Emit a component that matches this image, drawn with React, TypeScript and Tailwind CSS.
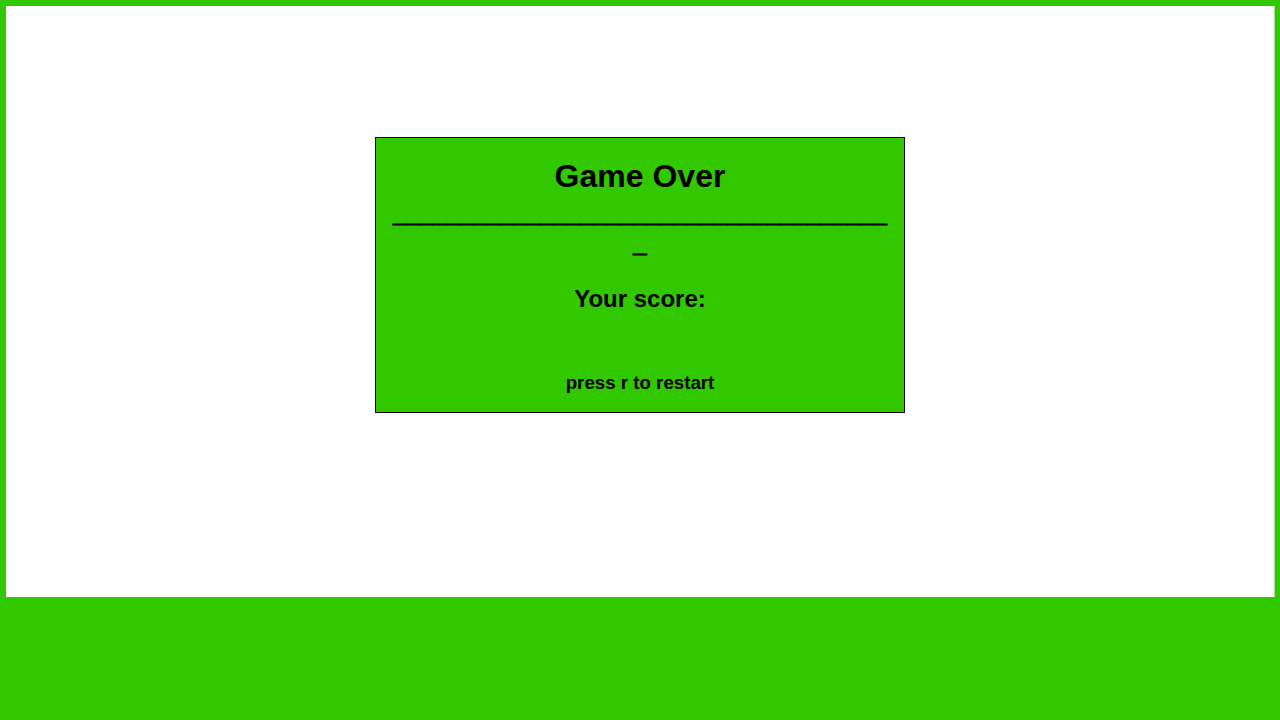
import React from "react";

export default function App() {
  const underscores = "_".repeat(38);
  return (
    <div
      className="h-[720px] w-[1280px] bg-[#32c800] pt-[6px] pl-[6px] pr-[5px]"
      style={{ fontFamily: '"Liberation Sans", Arial, sans-serif' }}
    >
      <div className="h-[591px] bg-white border-r border-[#a4e486] pt-[131px]">
        <div className="mx-auto h-[276px] w-[530px] border border-black bg-[#32c800] px-[14px] text-center font-bold text-black">
          <div className="mt-[20px] text-[32px] leading-[37px]">Game Over</div>
          <div className="mt-[4px] break-all text-[24px] leading-[30px] [-webkit-text-stroke:1px_black]">{underscores}</div>
          <div className="mt-[26px] text-[24px] leading-[28px]">Your score:</div>
          <div className="mt-[59px] text-[18.72px] leading-[22px]">press r to restart</div>
        </div>
      </div>
    </div>
  );
}
